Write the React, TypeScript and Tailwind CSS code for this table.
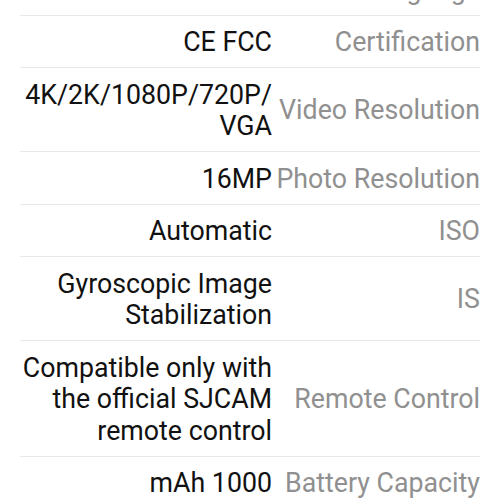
import React from "react";

const rows: { value: string[]; label: string }[] = [
  { value: ["Yes"], label: "Language" },
  { value: ["CE FCC"], label: "Certification" },
  { value: ["4K/2K/1080P/720P/", "VGA"], label: "Video Resolution" },
  { value: ["16MP"], label: "Photo Resolution" },
  { value: ["Automatic"], label: "ISO" },
  { value: ["Gyroscopic Image", "Stabilization"], label: "IS" },
  { value: ["Compatible only with", "the official SJCAM", "remote control"], label: "Remote Control" },
  { value: ["mAh 1000"], label: "Battery Capacity" },
];

export default function App() {
  return (
    <div
      className="w-[500px] h-[500px] overflow-hidden bg-white"
      style={{ fontFamily: "Roboto, 'Liberation Sans', sans-serif" }}
    >
      <div className="mx-[20px] -mt-[37px]">
        {rows.map((r, i) => (
          <div
            key={i}
            className="grid grid-cols-[252px_1fr] gap-x-[4px] pt-[11.5px] pb-[8.5px] border-b border-[#e8e8e8] text-[26.75px] leading-[31.5px]"
          >
            <div className="text-right text-[#111111] whitespace-nowrap">
              {r.value.map((v, j) => (
                <div key={j}>{v}</div>
              ))}
            </div>
            <div className="flex items-center justify-end text-right text-[#909090] whitespace-nowrap">
              {r.label}
            </div>
          </div>
        ))}
      </div>
    </div>
  );
}
